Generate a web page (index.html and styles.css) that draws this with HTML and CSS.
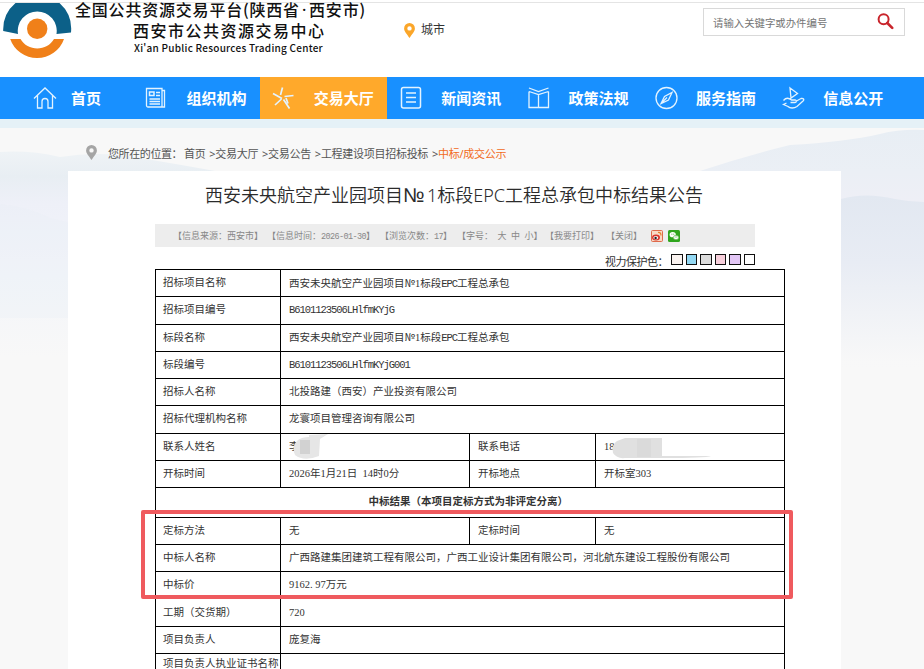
FILE: index.html
```html
<!DOCTYPE html>
<html lang="zh-CN">
<head>
    <meta charset="UTF-8">
    <title>全国公共资源交易平台(陕西省·西安市)</title>
    <link rel="stylesheet" href="styles.css">
</head>
<body>
    <header class="header">
        <svg class="logo" viewBox="0 0 70 58" width="70" height="58">
            <path d="M12.500 0H56.500A35 35 0 0 1 68 29.500L53.500 31A19.500 19.500 0 1 0 15 31L0.200 28A35 35 0 0 1 12.500 0Z" fill="#0c6088"/>
            <circle cx="34.200" cy="25.800" r="10.200" fill="#f08019"/>
            <path d="M7.200 36H17.500A19.500 19.500 0 0 0 51 36H61A28.500 28.500 0 0 1 7.200 36Z" fill="#f08019"/>
        </svg>
        <div class="site-name">
            <p class="name-main">全国公共资源交易平台(陕西省<span class="mid-dot">·</span>西安市)</p>
            <p class="name-sub">西安市公共资源交易中心</p>
            <p class="name-en">Xi'an Public Resources Trading Center</p>
        </div>
        <a class="city">
            <svg width="11" height="15" viewBox="0 0 11 15"><path fill-rule="evenodd" d="M5.500 0A5.400 5.400 0 0 0 0.100 5.400C0.100 8.500 3 11 5.500 15C8 11 10.900 8.500 10.900 5.400A5.400 5.400 0 0 0 5.500 0ZM5.500 3.200A2.200 2.200 0 1 1 5.500 7.600A2.200 2.200 0 0 1 5.500 3.200Z" fill="#fba629"/></svg>
            <span>城市</span>
        </a>
        <form class="search">
            <span class="search-text">请输入关键字或办件编号</span>
            <svg width="17" height="17" viewBox="0 0 17 17" fill="none" stroke="#c9252c"><circle cx="6.600" cy="6.300" r="5" stroke-width="2"/><path d="M10.300 10L15.200 14.900" stroke-width="2.600" stroke-linecap="round"/></svg>
        </form>
    </header>

    <nav class="nav">
        <a class="nav-item home">
            <svg class="icon" viewBox="0 0 24 24"><path d="M1 12.500L12 2L23 12.500M4.500 9.500V22H9V15.500A3 3 0 0 1 15 15.500V22H19.500V9.500"/></svg>
            <span>首页</span>
        </a>
        <a class="nav-item">
            <svg class="icon" viewBox="0 0 24 24"><path d="M2.500 2.500H18V21H4A1.500 1.500 0 0 1 2.500 19.500ZM18 4.500H20.500V21H18"/><path d="M5.500 6H10V9.500H5.500ZM12 6.500H16M12 9.500H16M5.500 13H16M5.500 15.500H16M5.500 18H16" stroke-width="1.500"/></svg>
            <span>组织机构</span>
        </a>
        <a class="nav-item active">
            <svg class="icon" viewBox="0 0 24 24"><path d="M10.500 1.500L8.500 9M1 7.500L10 12.500M9.500 13L3 19M11.500 13.500L17.500 22.500M12.500 10.500L21.500 9.500M14 12L16 17.500" stroke-width="1.700"/></svg>
            <span>交易大厅</span>
        </a>
        <a class="nav-item">
            <svg class="icon" viewBox="0 0 24 24"><rect x="2.500" y="1.500" width="19" height="20.500" rx="2" stroke-width="1.500"/><path d="M7 7H17M7 11.500H17M7 16H17" stroke-width="1.400"/></svg>
            <span>新闻资讯</span>
        </a>
        <a class="nav-item">
            <svg class="icon" viewBox="0 0 24 24"><path d="M2 2L11.500 5.500L21.500 2M2 5.500V21.500H21.500V5.500M2 5.500L11.500 8.500L21.500 5.500M11.500 8.500V21"/></svg>
            <span>政策法规</span>
        </a>
        <a class="nav-item">
            <svg class="icon" viewBox="0 0 24 24"><circle cx="12.500" cy="12" r="10.500"/><path d="M18 6.500L14.500 14L7 17.500L10.500 10.500ZM7 17.500L13 11.500"/></svg>
            <span>服务指南</span>
        </a>
        <a class="nav-item">
            <svg class="icon" viewBox="0 0 24 24"><path d="M9 2L16.500 7.500L10 12ZM9 2L10 12M2.500 14.500C5 11.500 8 12 10.500 14H14C16 14 15.500 16.500 14 16.500H9.500M15.500 15L20 12.500C22.500 12 23.500 13.500 22 15L16 20.500C13 22.500 9 22.500 7 20.500L2.500 18.500L5.500 17"/></svg>
            <span>信息公开</span>
        </a>
    </nav>

    <main class="main">
        <svg class="scenery" viewBox="0 0 924 260" preserveAspectRatio="none">
            <defs>
                <linearGradient id="left" x1="0" y1="0" x2="0" y2="1"><stop offset="0" stop-color="#eff3f6"/><stop offset="0.120" stop-color="#e8eef3"/><stop offset="0.250" stop-color="#eef0f8"/><stop offset="0.600" stop-color="#f3f5f9"/><stop offset="1" stop-color="#f8f8f8"/></linearGradient>
                <linearGradient id="right" x1="0" y1="0" x2="0" y2="1"><stop offset="0" stop-color="#e8eef4"/><stop offset="0.180" stop-color="#ebeff5"/><stop offset="0.300" stop-color="#eeeff6"/><stop offset="1" stop-color="#f8f8f8"/></linearGradient>
                <linearGradient id="near" x1="0" y1="0" x2="0" y2="1"><stop offset="0" stop-color="#e2e8f1"/><stop offset="0.400" stop-color="#e8ecf4"/><stop offset="1" stop-color="#f8f8f8"/></linearGradient>
            </defs>
            <path d="M0 24Q30 22 60 29Q90 24 120 27Q160 33 215 43V230H0Z" fill="url(#left)"/>
            <path d="M0 76Q25 78 50 90L90 100V190H0Z" fill="#e9edf6" opacity=".3"/>
            <path d="M700 43Q745 28 790 17Q845 14 880 6Q900 1 924 2V240H700Z" fill="url(#right)"/>
            <path d="M841 71Q865 64 895 71Q910 74 924 74V235H841Z" fill="url(#near)"/>
        </svg>
        <div class="breadcrumb">
            <svg width="11" height="15" viewBox="0 0 11 15"><path fill-rule="evenodd" d="M5.500 0A5.400 5.400 0 0 0 0.100 5.400C0.100 8.500 3 11 5.500 15C8 11 10.900 8.500 10.900 5.400A5.400 5.400 0 0 0 5.500 0ZM5.500 3.200A2.200 2.200 0 1 1 5.500 7.600A2.200 2.200 0 0 1 5.500 3.200Z" fill="#a5a5a5"/></svg>
            <span class="crumb-label">您所在的位置：</span>
            <span class="crumbs">首页 &gt;交易大厅 &gt;交易公告 &gt;工程建设项目招标投标 &gt;<em>中标/成交公示</em></span>
        </div>

        <article class="card">
            <h1>西安未央航空产业园项目<span class="title-no">№</span>1标段EPC工程总承包中标结果公告</h1>
            <div class="meta">
                <span class="m-source">【信息来源：西安市】</span>
                <span class="m-time">【信息时间：<tt>2026-01-30</tt>】</span>
                <span class="m-views">【浏览次数：<tt>17</tt>】</span>
                <span class="m-size">【字号：<i>大</i><i>中</i><i>小</i>】</span>
                <span class="m-print">【我要打印】</span>
                <span class="m-close">【关闭】</span>
                <svg class="share" viewBox="0 0 12 12"><rect x=".5" y=".5" width="11" height="11" rx="1" fill="#f8d9c4" stroke="#df6a4b"/><ellipse cx="5" cy="7.500" rx="4" ry="3" fill="#d9332b"/><ellipse cx="4.800" cy="7.800" rx="2.400" ry="1.700" fill="#fff"/><circle cx="4.600" cy="8" r="1.200" fill="#222"/><path d="M7 2.500Q10 2 10 5.500" fill="none" stroke="#e5812c" stroke-width="1.200"/></svg>
                <svg class="share" viewBox="0 0 12 12"><rect width="12" height="12" rx="1.500" fill="#2fa51d"/><ellipse cx="4.700" cy="4.700" rx="3.100" ry="2.600" fill="#fff"/><ellipse cx="8" cy="7.500" rx="2.700" ry="2.200" fill="#fff" stroke="#2fa51d" stroke-width=".5"/><path d="M3.500 4.200h.8M5.400 4.200h.8M6.800 7h.7M8.500 7h.7" stroke="#2fa51d"/></svg>
            </div>
            <div class="eye-care">
                <span>视力保护色：</span>
                <b class="c1"></b><b class="c2"></b><b class="c3"></b><b class="c4"></b><b class="c5"></b><b class="c6"></b>
            </div>
            <div class="result">
                <table>
                    <colgroup><col class="col-a"><col class="col-b"><col class="col-c"><col class="col-d"></colgroup>
                    <tr><td>招标项目名称</td><td colspan="3">西安未央航空产业园项目<span class="no">№</span>1标段<span class="code">EPC</span>工程总承包</td></tr>
                    <tr><td>招标项目编号</td><td colspan="3"><span class="code">B6101123506LHlfmKYjG</span></td></tr>
                    <tr><td>标段名称</td><td colspan="3">西安未央航空产业园项目<span class="no">№</span>1标段<span class="code">EPC</span>工程总承包</td></tr>
                    <tr><td>标段编号</td><td colspan="3"><span class="code">B6101123506LHlfmKYjG001</span></td></tr>
                    <tr><td>招标人名称</td><td colspan="3">北投路建（西安）产业投资有限公司</td></tr>
                    <tr><td>招标代理机构名称</td><td colspan="3">龙寰项目管理咨询有限公司</td></tr>
                    <tr><td>联系人姓名</td><td><div class="hidden-value">李<svg class="mask mask-name" viewBox="0 0 40 26"><path d="M8 6Q12 3 19 3V1L38 0L30 5L29 22Q14 28 5 21Q1 12 8 6Z" fill="#e6e6e6"/><path d="M10 6H20V20H10Z" fill="#d2d2d2"/></svg></div></td><td>联系电话</td><td><div class="hidden-value">18<svg class="mask mask-phone" viewBox="0 0 104 22"><path d="M6 3L14 0H51V18H100Q95 20 51 20H14Q6 21 2 15Q0 7 6 3Z" fill="#e0e0e0"/><path d="M26 1H40V19H26Z" fill="#dadada"/></svg></div></td></tr>
                    <tr><td>开标时间</td><td>2026年1月21日&nbsp; 14时0分</td><td>开标地点</td><td>开标室303</td></tr>
                    <tr class="section"><th colspan="4">中标结果（本项目定标方式为非评定分离）</th></tr>
                    <tr><td>定标方法</td><td>无</td><td>定标时间</td><td>无</td></tr>
                    <tr><td>中标人名称</td><td colspan="3">广西路建集团建筑工程有限公司，广西工业设计集团有限公司，河北航东建设工程股份有限公司</td></tr>
                    <tr><td>中标价</td><td colspan="3">9162<span class="dot">.</span>97万元</td></tr>
                    <tr><td>工期（交货期）</td><td colspan="3">720</td></tr>
                    <tr><td>项目负责人</td><td colspan="3">庞复海</td></tr>
                    <tr class="last"><td>项目负责人执业证书名称</td><td colspan="3"></td></tr>
                </table>
                <div class="highlight"></div>
            </div>
        </article>
    </main>
</body>
</html>
```

FILE: styles.css
```css
* {
    box-sizing: border-box;
}
body {
    margin: 0;
    height: 669px;
    overflow: hidden;
    background: #fff;
    font-family: "Noto Sans", "Noto Sans CJK SC", sans-serif;
    color: #333;
}
p, h1 {
    margin: 0;
    font-weight: normal;
}
em, i {
    font-style: normal;
}

/* header */
.header {
    display: flex;
    align-items: flex-start;
    height: 77px;
    border-top: 1px solid #fff;
    box-shadow: inset 0 2px 0 -1px #fff, inset 0 2px 0 #e4e4e4;
}
.logo {
    flex: none;
    margin: 2px 0 0 3px;
}
.site-name {
    width: 296px;
    margin-left: 2px;
    color: #111;
    white-space: nowrap;
    font-family: "Noto Sans CJK SC", sans-serif;
}
.name-main {
    height: 19px;
    line-height: 17px;
    font-size: 16px;
    font-weight: 500;
    letter-spacing: 0.8px;
}
.mid-dot {
    font-family: "Noto Sans", sans-serif;
    margin: 0 2px;
}
.name-sub {
    height: 20px;
    padding-left: 58px;
    line-height: 20px;
    font-size: 16px;
    font-weight: 500;
    letter-spacing: 1.5px;
}
.name-en {
    padding-left: 59px;
    line-height: 16px;
    font-size: 10px;
    font-weight: 500;
    letter-spacing: 0.25px;
}
.city {
    display: flex;
    gap: 6px;
    align-items: center;
    width: 60px;
    margin: 20px 0 0 33px;
    font-size: 12px;
    line-height: 18px;
}
.search {
    display: flex;
    justify-content: space-between;
    align-items: center;
    width: 202px;
    height: 28px;
    margin: 7px 0 0 239px;
    padding: 0 10px 0 9px;
    border: 1px solid #d9d9d9;
    color: #757575;
    font-size: 10.400px;
}
.search svg {
    margin-top: -1px;
}

/* navigation */
.nav {
    display: flex;
    height: 42px;
    padding-left: 5px;
    background: #1890ff;
}
.nav-item {
    display: flex;
    align-items: center;
    flex: none;
    gap: 18px;
    width: 127.400px;
    padding-left: 12px;
    color: #fff;
    font-size: 15px;
    font-weight: bold;
}
.nav-item.home {
    gap: 14px;
    padding-left: 28px;
}
.nav-item.active {
    background: #ffa92b;
}
.nav-item span {
    margin-top: -2px;
}
.icon {
    flex: none;
    width: 24px;
    height: 24px;
    fill: none;
    stroke: #e3f3ff;
    stroke-width: 1.3;
}

/* page body */
.main {
    position: relative;
    height: 550px;
    border-top: 9px solid #e5f1f7;
    background: #f8f8f8;
}
.scenery {
    position: absolute;
    top: 0;
    left: 0;
    width: 924px;
    height: 260px;
}
.breadcrumb {
    position: relative;
    display: flex;
    align-items: center;
    height: 43px;
    padding: 6px 0 0 86px;
    font-size: 11px;
    letter-spacing: -0.400px;
    color: #555;
    white-space: nowrap;
}
.crumb-label {
    width: 76px;
    margin-left: 11px;
}
.crumbs {
    word-spacing: 1.300px;
    letter-spacing: -0.280px;
}
.breadcrumb em {
    color: #f26a22;
}
.card {
    position: relative;
    width: 773px;
    height: 498px;
    margin-left: 68px;
    padding-left: 87px;
    background: #fff;
}
h1 {
    height: 53px;
    padding-left: 50px;
    line-height: 49px;
    font-size: 18px;
    font-weight: 350;
    color: #2b2b2b;
    white-space: nowrap;
}
.title-no {
    display: inline-block;
    width: 24px;
    font-family: "Liberation Sans", sans-serif;
    font-size: 20px;
    line-height: 20px;
}
.meta {
    display: flex;
    align-items: center;
    width: 600px;
    height: 23px;
    padding-left: 18px;
    background: #ededed;
    color: #888;
    font-family: "Liberation Serif", "Noto Sans CJK SC", serif;
    font-size: 9px;
    white-space: nowrap;
}
.meta span {
    flex: none;
}
.meta tt {
    font-family: "Liberation Mono", monospace;
    font-size: 8.500px;
    letter-spacing: -0.600px;
}
.m-source {
    width: 94px;
}
.m-time {
    width: 113px;
}
.m-views {
    width: 77px;
}
.m-size {
    width: 88px;
}
.m-size i {
    margin-left: 4.500px;
}
.m-print {
    width: 61px;
}
.m-close {
    width: 45px;
}
.share {
    width: 12px;
    height: 12px;
    margin-right: 5px;
}
.eye-care {
    display: flex;
    justify-content: flex-end;
    gap: 3px;
    width: 600px;
    height: 22px;
    padding-top: 7px;
    font-size: 11px;
    line-height: 16px;
    letter-spacing: -0.500px;
}
.eye-care b {
    width: 11.500px;
    height: 11px;
    border: 1px solid #111;
}
.c1 { background: #faf3f0; }
.c2 { background: #93d8f3; }
.c3 { background: #dcdcdc; }
.c4 { background: #f7cfdb; }
.c5 { background: #e2c6f5; }
.c6 { background: #fff; }

/* result table */
.result {
    position: relative;
    width: 630px;
}
table {
    width: 629.400px;
    border-collapse: collapse;
    table-layout: fixed;
    font-family: "Liberation Serif", "Noto Sans CJK SC", serif;
    font-size: 10.500px;
    line-height: 16px;
}
.col-a { width: 125px; }
.col-b { width: 189px; }
.col-c { width: 126px; }
.col-d { width: 189.400px; }
tr {
    height: 27.280px;
}
td, th {
    padding: 0 0 0 8px;
    border: 1px solid #000;
    white-space: nowrap;
}
tr td:first-child {
    padding-left: 7px;
}
tr.section {
    height: 29.500px;
}
.section th {
    padding: 0 4px 0 0;
}
.last td {
    padding-top: 0;
    line-height: 20px;
    vertical-align: top;
}
.code {
    font-family: "Liberation Mono", monospace;
    letter-spacing: -1.050px;
}
.no {
    display: inline-block;
    width: 10.500px;
    font-family: "Noto Sans CJK SC", sans-serif;
}
.dot {
    display: inline-block;
    width: 5.250px;
}
.hidden-value {
    position: relative;
}
.mask {
    position: absolute;
}
.mask-name {
    top: -5px;
    left: 1px;
    width: 40px;
    height: 26px;
}
.mask-phone {
    top: -1px;
    left: 7px;
    width: 104px;
    height: 22px;
}
.highlight {
    position: absolute;
    top: 241px;
    left: -14px;
    width: 652px;
    height: 89px;
    border: 4px solid #ef5a5e;
    border-radius: 2px;
}
```
